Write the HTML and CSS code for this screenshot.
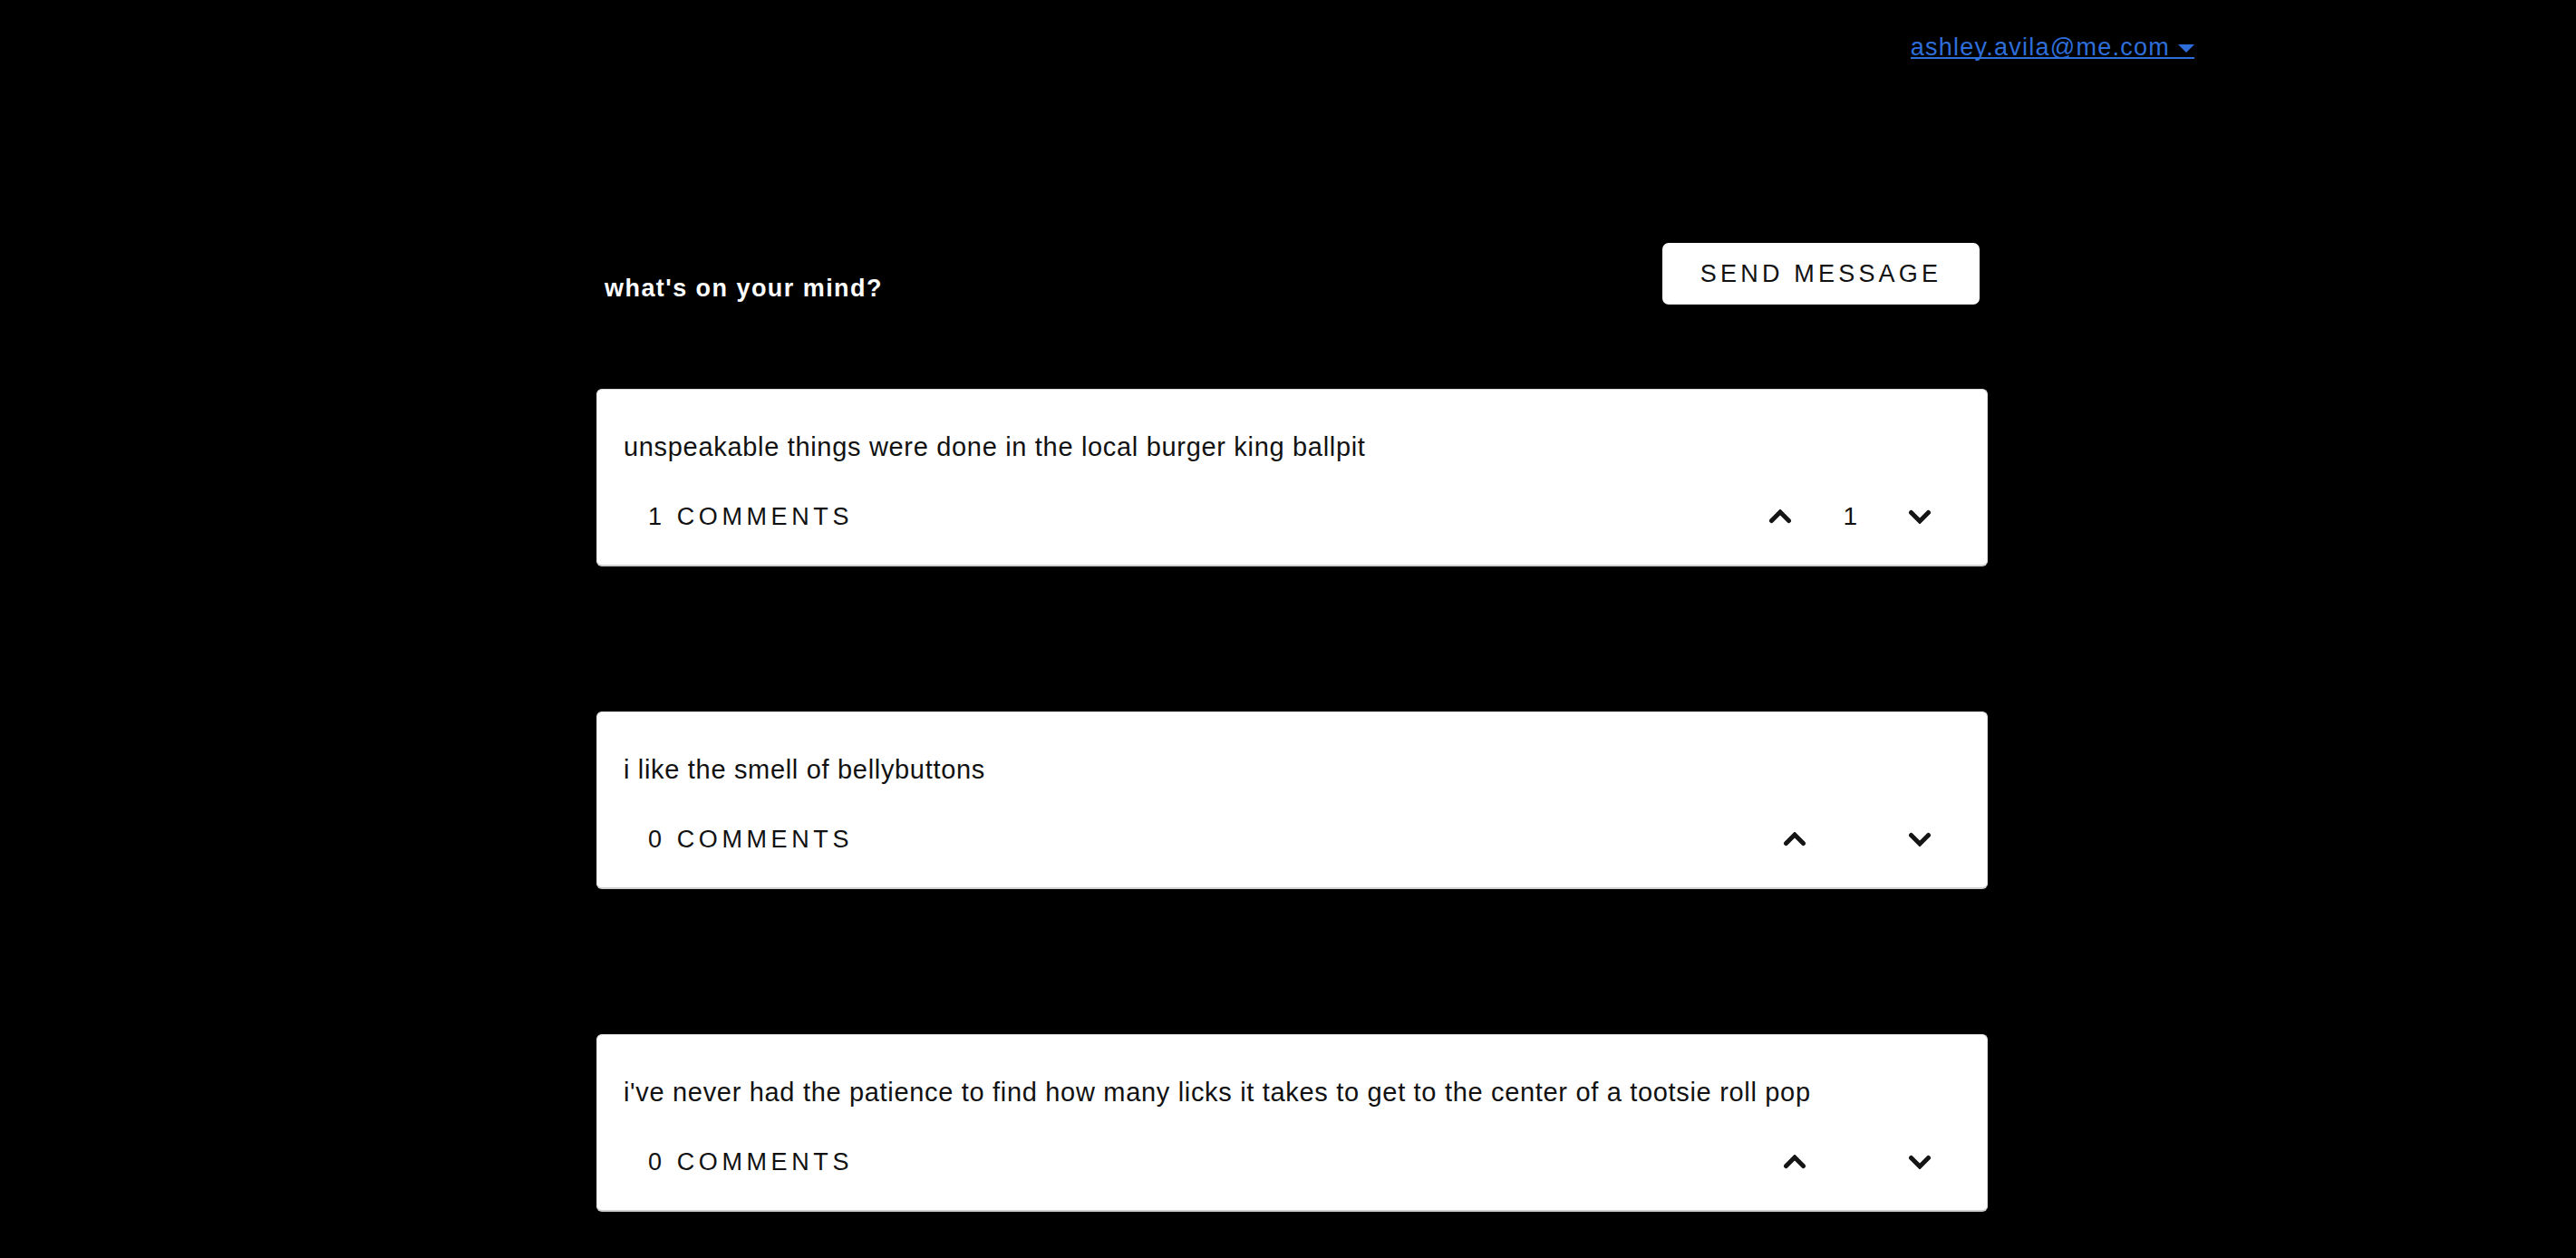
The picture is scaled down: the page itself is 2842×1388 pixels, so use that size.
FILE: index.html
```html
<!DOCTYPE html>
<html lang="en">
<head>
<meta charset="utf-8">
<title>Feed</title>
<link rel="stylesheet" href="styles.css">
</head>
<body>
<header class="topbar">
  <a class="user" href="#"><span>ashley.avila@me.com</span><svg class="caret" width="18" height="9" viewBox="0 0 18 9"><path d="M0 0H18L9 9Z" fill="currentColor"/></svg></a>
</header>
<main class="page">
  <div class="feed">
    <div class="composer">
      <div class="prompt">what's on your mind?</div>
      <button class="send">SEND MESSAGE</button>
    </div>
    <ul class="posts">
      <li class="post">
        <p class="post-text">unspeakable things were done in the local burger king ballpit</p>
        <div class="post-foot">
          <button class="comments">1 COMMENTS</button>
          <div class="votes">
            <button class="vote"><svg width="26" height="16" viewBox="0 0 26 16"><polyline points="3.5,12.5 13,3 22.5,12.5" fill="none" stroke="currentColor" stroke-width="5" stroke-linecap="round"/></svg></button>
            <span class="count">1</span>
            <button class="vote"><svg width="26" height="16" viewBox="0 0 26 16"><polyline points="3.5,3.5 13,13 22.5,3.5" fill="none" stroke="currentColor" stroke-width="5" stroke-linecap="round"/></svg></button>
          </div>
        </div>
      </li>
      <li class="post">
        <p class="post-text">i like the smell of bellybuttons</p>
        <div class="post-foot">
          <button class="comments">0 COMMENTS</button>
          <div class="votes">
            <button class="vote"><svg width="26" height="16" viewBox="0 0 26 16"><polyline points="3.5,12.5 13,3 22.5,12.5" fill="none" stroke="currentColor" stroke-width="5" stroke-linecap="round"/></svg></button>
            <span class="count"></span>
            <button class="vote"><svg width="26" height="16" viewBox="0 0 26 16"><polyline points="3.5,3.5 13,13 22.5,3.5" fill="none" stroke="currentColor" stroke-width="5" stroke-linecap="round"/></svg></button>
          </div>
        </div>
      </li>
      <li class="post">
        <p class="post-text">i've never had the patience to find how many licks it takes to get to the center of a tootsie roll pop</p>
        <div class="post-foot">
          <button class="comments">0 COMMENTS</button>
          <div class="votes">
            <button class="vote"><svg width="26" height="16" viewBox="0 0 26 16"><polyline points="3.5,12.5 13,3 22.5,12.5" fill="none" stroke="currentColor" stroke-width="5" stroke-linecap="round"/></svg></button>
            <span class="count"></span>
            <button class="vote"><svg width="26" height="16" viewBox="0 0 26 16"><polyline points="3.5,3.5 13,13 22.5,3.5" fill="none" stroke="currentColor" stroke-width="5" stroke-linecap="round"/></svg></button>
          </div>
        </div>
      </li>
    </ul>
  </div>
</main>
</body>
</html>
```
FILE: styles.css
```css
html, body {
  margin: 0;
  padding: 0;
  background: #000;
}
body {
  font-family: "Liberation Sans", Arial, Helvetica, sans-serif;
  color: #111;
  overflow: hidden;
}
.topbar {
  display: flex;
  justify-content: flex-end;
  align-items: flex-start;
  padding: 41px 421px 0 0;
}
.user {
  display: inline-flex;
  align-items: center;
  gap: 9px;
  color: #2e6edb;
  text-decoration: none;
  font-size: 27px;
  letter-spacing: 1.25px;
  line-height: 22px;
  border-bottom: 2px solid #2e6edb;
}
.caret {
  display: block;
  margin-top: 2px;
}
.page {
  display: flex;
  justify-content: center;
  padding-left: 9px;
}
.feed {
  width: 1535px;
  padding-top: 203px;
}
.composer {
  display: flex;
  justify-content: space-between;
  align-items: flex-start;
  padding: 0 9px;
}
.prompt {
  margin-top: 33px;
  color: #fff;
  font-weight: bold;
  font-size: 27px;
  letter-spacing: 1.45px;
  line-height: 34px;
}
.send {
  width: 350px;
  height: 68px;
  background: #fff;
  border: 0;
  border-radius: 7px;
  font-family: inherit;
  font-size: 27px;
  letter-spacing: 4.2px;
  color: #111;
  padding: 0;
}
.posts {
  list-style: none;
  margin: 93px 0 0;
  padding: 0;
  display: flex;
  flex-direction: column;
  gap: 160px;
}
.post {
  background: #fff;
  border: 1px solid #dcdcdc;
  border-bottom: 2px solid #cfcfcf;
  border-radius: 6px;
  padding: 45px 28px 35px 29px;
}
.post-text {
  margin: 0;
  font-size: 29px;
  letter-spacing: 0.68px;
  line-height: 36px;
  white-space: nowrap;
}
.post-foot {
  margin-top: 41px;
  display: flex;
  justify-content: space-between;
  align-items: center;
  height: 36px;
}
.comments {
  background: none;
  border: 0;
  padding: 0 0 0 27px;
  font-family: inherit;
  font-size: 27px;
  letter-spacing: 4.6px;
  line-height: 36px;
  color: #111;
}
.votes {
  display: flex;
  align-items: center;
  margin-right: 33px;
}
.vote {
  background: none;
  border: 0;
  padding: 0;
  color: #151515;
  display: flex;
}
.vote svg {
  display: block;
}
.count {
  margin: 0 56px;
  font-size: 28px;
  line-height: 36px;
  color: #111;
}
```
